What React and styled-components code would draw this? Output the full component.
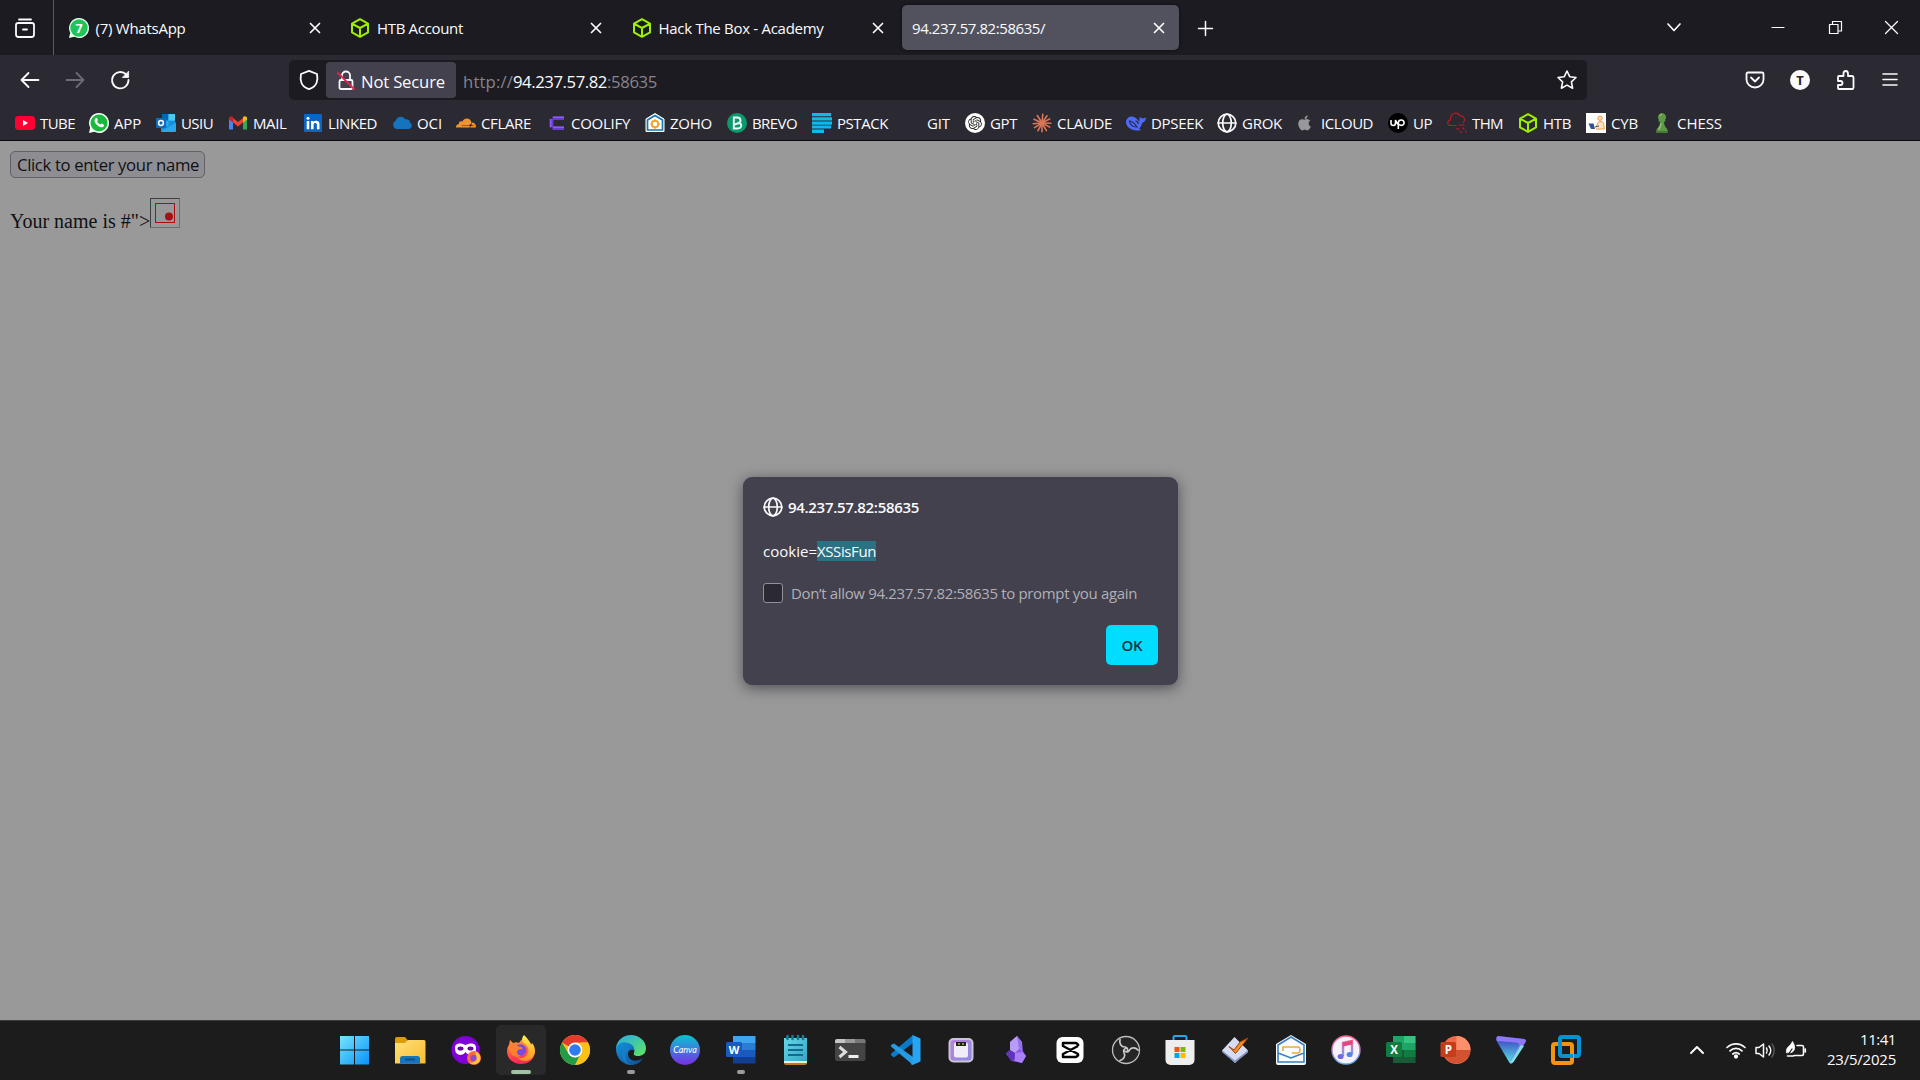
import React, { useLayoutEffect, useRef, useState } from "react";
import styled, { createGlobalStyle } from "styled-components";
import { FaApple, FaChessPawn } from "react-icons/fa";
import { SiOpenai, SiCloudflare } from "react-icons/si";

const ui = `"Segoe UI", "Open Sans", "Noto Sans", sans-serif`;

const Global = createGlobalStyle`
  * { box-sizing: border-box; }
  html, body { margin: 0; padding: 0; overflow: hidden; background: #1c1b22; }
  svg { display: block; flex: none; overflow: visible; }
`;

/* ---------- text ---------- */

const TextRun = styled.span`
  display: block;
  flex: none;
  white-space: pre;
  font-family: ${ui};
  font-size: ${(p) => p.$size || 15}px;
  font-weight: ${(p) => p.$weight || 400};
  font-stretch: 93%;
  line-height: 20px;
  color: ${(p) => p.$color || "#fbfbfe"};
  background: ${(p) => p.$bg || "transparent"};
`;

/* A label whose tracking is adjusted so that it fills the given width. */
function Text({ w, size, weight, color, bg, children }) {
  const ref = useRef(null);
  const [gap, setGap] = useState(0);
  useLayoutEffect(() => {
    const range = document.createRange();
    range.selectNodeContents(ref.current);
    const natural = range.getBoundingClientRect().width;
    setGap((w - natural) / children.length);
  }, [w, children]);
  return (
    <TextRun ref={ref} $size={size} $weight={weight} $color={color} $bg={bg} style={{ width: w, letterSpacing: gap }}>
      {children}
    </TextRun>
  );
}

/* ---------- layout ---------- */

const Screen = styled.div`
  width: 1920px;
  height: 1080px;
  display: flex;
  flex-direction: column;
  font-family: ${ui};
`;

const TabStrip = styled.header`
  height: 55px;
  flex: none;
  display: flex;
  background: #1c1b22;
`;

const ViewButton = styled.div`
  width: 54px;
  padding: 18px 0 0 15px;
  border-right: 1px solid #5c5b63;
`;

const Tabs = styled.nav`
  display: flex;
  gap: 4.5px;
  padding: 5px 0 5px 3.5px;
`;

const Tab = styled.div`
  width: 277px;
  height: 45px;
  display: flex;
  align-items: center;
  gap: 7px;
  padding: 0 15px 0 ${(p) => (p.$active ? 10 : 11)}px;
  border-radius: 5px;
  background: ${(p) => (p.$active ? "#52525e" : "transparent")};
  box-shadow: ${(p) => (p.$active ? "0 0 3px rgba(0,0,0,.6)" : "none")};
`;

const TabTitle = styled.div`
  flex: 1;
  padding-top: 1px;
`;

const NewTab = styled.div`
  padding: 21px 0 0 19px;
`;

const WindowControls = styled.div`
  margin-left: auto;
  display: flex;
  align-items: center;
  height: 55px;
  padding-right: 22px;
`;

const Control = styled.div`
  width: ${(p) => p.$w}px;
  display: flex;
  justify-content: flex-end;
`;

const Toolbar = styled.div`
  height: 51px;
  flex: none;
  display: flex;
  align-items: center;
  padding: 0 0 1px 20px;
  background: #2b2a33;
`;

const NavButtons = styled.div`
  width: 269px;
  display: flex;
  gap: 25px;
`;

const UrlBar = styled.div`
  width: 1298px;
  height: 40px;
  display: flex;
  align-items: center;
  padding: 0 10px;
  border-radius: 5px;
  background: #1c1b22;
`;

const Identity = styled.div`
  width: 130px;
  height: 36px;
  margin: 0 7px;
  display: flex;
  align-items: center;
  gap: 6px;
  padding-left: 11px;
  border-radius: 4px;
  background: #42414d;
`;

const UrlText = styled.div`
  display: flex;
  padding-top: 4px;
`;

const Push = styled.div`
  margin-left: auto;
`;

const ToolIcons = styled.div`
  margin-left: auto;
  display: flex;
  gap: 25px;
  padding-right: 20px;
`;

const BookmarkBar = styled.div`
  height: 35px;
  flex: none;
  display: flex;
  padding: 7px 0 0 15px;
  background: #2b2a33;
  border-bottom: 1px solid #08080a;
`;

const Bookmark = styled.div`
  width: ${(p) => p.$w}px;
  height: 20px;
  flex: none;
  display: flex;
  gap: 5px;
`;

const Page = styled.main`
  flex: 1;
  position: relative;
  background: #99999a;
`;

const Content = styled.section`
  padding: 10px;
`;

const NameButton = styled.div`
  width: 195px;
  height: 27px;
  display: flex;
  align-items: center;
  padding-left: 6px;
  border: 1px solid #626266;
  border-radius: 5px;
  background: #8e8e92;
`;

const NameLine = styled.p`
  margin: 20px 0 0;
  display: flex;
  align-items: flex-end;
  font: 20px/22px "Liberation Serif", serif;
  color: #101012;
`;

const NameText = styled.span`
  width: 140px;
  height: 18px;
  white-space: pre;
`;

const Broken = styled.span`
  width: 30px;
  height: 30px;
  padding: 4px;
  border: 1px solid;
  border-color: #3f3f42 #6f6f72 #6f6f72 #3f3f42;
`;

const Dialog = styled.section`
  position: absolute;
  left: 743px;
  top: 336px;
  width: 435px;
  height: 208px;
  display: flex;
  flex-direction: column;
  padding: 20px 20px 20px;
  border-radius: 9px;
  background: #42414d;
  box-shadow: 0 3px 14px rgba(20, 20, 26, 0.55);
`;

const DialogRow = styled.div`
  height: 20px;
  display: flex;
  align-items: center;
  gap: ${(p) => p.$gap || 0}px;
  margin-bottom: ${(p) => p.$mb || 0}px;
`;

const Checkbox = styled.span`
  width: 20px;
  height: 20px;
  border: 1px solid #8f8f9d;
  border-radius: 3px;
  background: #2b2a33;
`;

const OkButton = styled.div`
  align-self: flex-end;
  margin-top: auto;
  width: 52px;
  height: 40px;
  display: flex;
  align-items: center;
  justify-content: center;
  border-radius: 5px;
  background: #00ddff;
`;

const Taskbar = styled.footer`
  height: 60px;
  flex: none;
  display: flex;
  padding-left: 327px;
  background: #1c1c1c;
  border-top: 1px solid #3a3a3a;
`;

const Slot = styled.div`
  width: 55.07px;
  display: flex;
  justify-content: center;
  padding: 4px 0 0 ${(p) => p.$shift || 0}px;
`;

const Tile = styled.div`
  width: 50px;
  height: 50px;
  flex: none;
  display: flex;
  flex-direction: column;
  align-items: center;
  justify-content: space-between;
  padding: 10px 0 1px;
  border-radius: 5px;
  background: ${(p) => (p.$active ? "#292929" : "transparent")};
`;

const Mark = styled.i`
  width: ${(p) => p.$w}px;
  height: 4px;
  border-radius: 2px;
  background: ${(p) => (p.$active ? "#a3c2a5" : "#9b9b9b")};
`;

const Tray = styled.div`
  margin-left: auto;
  display: flex;
  padding-right: 24px;
`;

const TrayIcons = styled.div`
  display: flex;
  align-items: center;
  gap: 10px;
  height: 58px;
  margin-right: 21px;
`;

const Overflow = styled.div`
  margin-right: 12px;
`;

const Clock = styled.div`
  display: flex;
  flex-direction: column;
  align-items: flex-end;
  padding-top: 8px;
`;

/* ---------- icons ---------- */

const Line = ({ s = 20, h, c = "#fbfbfe", sw = 1.8, children }) => (
  <svg width={s} height={h || s} viewBox={`0 0 ${s} ${h || s}`} fill="none" stroke={c} strokeWidth={sw} strokeLinecap="round" strokeLinejoin="round">
    {children}
  </svg>
);
const Art = ({ s = 20, children }) => (
  <svg width={s} height={s} viewBox={`0 0 ${s} ${s}`}>{children}</svg>
);

const Cross = ({ s = 10, sw = 1.7 }) => <Line s={s} sw={sw}><path d={`M.5 .5 ${s - 0.5} ${s - 0.5}M${s - 0.5} .5 .5 ${s - 0.5}`} /></Line>;
const Globe = () => (
  <Line sw={1.7}><circle cx="10" cy="10" r="8.8" /><ellipse cx="10" cy="10" rx="4.3" ry="8.8" /><path d="M1.2 10h17.6" /></Line>
);
const HtbCube = () => (
  <Line c="#9fef00" sw={2}><path d="M10 1.2 18 5.6v8.8L10 18.8 2 14.4V5.6ZM2.4 5.8 10 10l7.6-4.2M10 10v8.5" /></Line>
);
const bubble = "M10 0a10 10 0 1 1-4.7 18.8L0 20l1.2-5.2A10 10 0 0 1 10 0Z";
const WhatsTab = () => (
  <Art><path d={bubble} fill="#e4ffec" /><circle cx="10" cy="10" r="8.700" fill="#1fc45a" /><text x="10" y="14.600" textAnchor="middle" fontFamily="Open Sans" fontWeight="700" fontSize="12.500" fill="#fff">7</text></Art>
);
const WhatsMark = () => (
  <Art><path d={bubble} fill="#f4fff6" /><circle cx="10" cy="10" r="8.500" fill="#19b93c" /><path d="M6.500 5.200c.8-.7 1.600-.4 1.900.6l.4 1c.2.8-.7 1.200-.7 1.600.6 1.400 1.800 2.500 3.300 3.100.5.100.9-1 1.500-.9l1.600.8c1 .5.4 2-.5 2.500-2 1.200-5.300-.5-7-2.800C5.400 9.200 5 6.600 6.500 5.200Z" fill="#fff" /></Art>
);

const B = {
  TUBE: <Art><rect y="3" width="20" height="14" rx="3.4" fill="#ff0033" /><path d="m8 7 5 3-5 3Z" fill="#fff" /></Art>,
  APP: <WhatsMark />,
  USIU: <Art><rect x="6" y="1" width="13" height="13" fill="#28a8ea" /><path d="M6 1h6.500v6.500H6z" fill="#0364b8" /><path d="M12.500 7.500H19V14h-6.500z" fill="#1490df" /><path d="M12.500 1H19v6.500h-6.500z" fill="#50c4f4" /><path d="M5 10l8 4 7-5v8.500a1.500 1.500 0 0 1-1.500 1.500H6.500A1.500 1.500 0 0 1 5 17.500Z" fill="#1a8fe0" /><path d="m5 18 15-8v8l-1 1H6Z" fill="#2ba6ea" /><rect y="5" width="10" height="10" rx="1" fill="#0f6cbd" /><circle cx="5" cy="10" r="2.400" fill="none" stroke="#fff" strokeWidth="1.500" /></Art>,
  MAIL: <Art><path d="M1 4.500v12h4V9Z" fill="#4285f4" /><path d="M15 9v7.500h4v-12Z" fill="#34a853" /><path d="M5 5v4.500l5 4 5-4V5l-5 4Z" fill="#ea4335" /><path d="M1 5.500C1 3 3.400 2.600 5 4v5.500L1 6.500Z" fill="#c5221f" /><path d="M19 5.500C19 3 16.600 2.600 15 4v5.500l4-3Z" fill="#fbbc04" /></Art>,
  LINKED: <Art><rect x="1" y="1" width="18" height="18" rx="1" fill="#0a66c2" /><path d="M3.700 8h2.600v8.300H3.700zM8 8h2.500v1.200c1.400-2.200 6-2 6 2v5.100h-2.600v-4.500c0-2.500-3.300-2.200-3.300 0v4.500H8z" fill="#fff" /><circle cx="5" cy="5.200" r="1.500" fill="#fff" /></Art>,
  OCI: <Art><path d="M4.500 16A4.300 4.300 0 0 1 3.500 8C5 3 11 2.500 13 6.200c3.500-.4 5 1 5 3.300 3 2 2 6.500-1.500 6.500Z" fill="#1673be" /></Art>,
  CFLARE: <SiCloudflare size={20} color="#f6922d" />,
  COOLIFY: <Art><path d="M6.500 3.500H18v3.500H7.500v6.500H18V17H6.500v-2.500H3.500V6h3Z" fill="#6a3bcf" /><path d="M7 3.500h11v1.500H7zM7 13.500h11V15H7zM4 6h1.500v8H4z" fill="#8b5cf6" /></Art>,
  ZOHO: <Art><path d="M10 .5 19 6v12.500H1V6Z" fill="#fff" stroke="#fff" strokeLinejoin="round" /><path d="M10 2.500 17.500 7v10H2.500V7Z" fill="none" stroke="#1677ae" strokeWidth="1.700" /><circle cx="10" cy="11" r="3.200" fill="none" stroke="#f0a226" strokeWidth="1.800" /><path d="M10 6v2M10 14v2M5.500 11h1.500M13 11h2M6.800 7.800l1.200 1.200M12 13l1.200 1.200M13.200 7.800 12 9M8 13l-1.200 1.200" stroke="#f0a226" strokeWidth="1.300" /></Art>,
  BREVO: <Art><circle cx="10" cy="10" r="10" fill="#0b996e" /><path d="M6.800 4.500v11h3.700c4.800 0 4.800-5.500 1.200-5.500 2.800-1 2.300-5.500-1.300-5.500ZM6.800 11.800 11.700 10" fill="none" stroke="#effff9" strokeWidth="1.900" /></Art>,
  PSTACK: <Art><path d="M0 0h19v3.300H0zM0 4.200h20v3.300H0zM0 8.400h20v3.300H0zM0 12.500h19v3H0zM0 16.500h12V20H0z" fill="#11b9ea" /></Art>,
  GIT: <Art />,
  GPT: <Art><circle cx="10" cy="10" r="10" fill="#fff" /><SiOpenai x="3" y="3" size={14} color="#222" /></Art>,
  CLAUDE: <Line c="#d97757" sw={1.600}>{[5, 35, 62, 92, 118, 150, 180, 208, 238, 265, 295, 328].map((a) => <path key={a} d="M10 10V1.200" transform={`rotate(${a} 10 10)`} />)}</Line>,
  DPSEEK: <Art><path d="M0 8C2 2.500 6 2.800 9 4.500c2 1 3 3 4.500 4.200V4l3 1.500c1.500-.1 2.500-.6 3.500-1-.3 3-1.700 5-4 5.500-.2 2.500-1.200 4-3 5.500l2 1.500c-4 1-6 .6-9-.5C2 15-.2 12 0 8Z" fill="#4d6bfe" /><path d="M3.500 8c3-.2 5.500 3 7.500 6-3.700.2-6.800-2-7.500-6ZM9.500 8c1.300-.1 2.500 1.300 3 3" fill="none" stroke="#2b2a33" strokeWidth="1.200" /></Art>,
  GROK: <Globe />,
  ICLOUD: <Art><FaApple x="0" y="1.500" size={17} color="#98979b" /></Art>,
  UP: <Art><circle cx="10" cy="10" r="10" fill="#000" /><path d="M3 7v3.300c0 3 4.500 3 4.500 0V7c1 2.500 1.500 4 3.200 4.800M10.300 16v-6c0-4 5.800-4 5.800-.3 0 3-3.300 3.400-5 1.500" fill="none" stroke="#fff" strokeWidth="1.600" /></Art>,
  THM: <Line c="#b51b28" sw={1.200}><path d="M9 12.500H4C-.5 12.500 0 7.500 3.500 7 3-1 11-1.500 13 3c4-.5 6 3.500 3.500 6.500M12 12h5M9.500 16h3M16 15l1 1M13 19h2M18.500 18l.8 1" /></Line>,
  HTB: <HtbCube />,
  CYB: <Art><rect width="20" height="20" fill="#fdfdfd" /><path d="M2.500 10.500h5L9 16H5z" fill="#2e5191" /><path d="M10.500 13 12 9.500c1-1.500 5-1.500 5.500.5l1 6H10" fill="#fbe0bd" stroke="#eba04b" /><circle cx="14" cy="5.200" r="2.200" fill="#fbd8ad" stroke="#eba04b" /><path d="m9 14 4-1" stroke="#2e5191" /></Art>,
  CHESS: <Art><path d="M10 0a4.200 4.200 0 0 1 3 7l1 1.500h-2c0 3 1 5.500 3.500 8V20h-11v-3.500C7 14 8 11.500 8 8.500H6L7 7a4.200 4.200 0 0 1 3-7Z" fill="#5d9948" /><path d="M8 3a2.500 2.500 0 0 1 2-1.600M9.200 10c-.2 2.500-1 4.500-2.500 6.500" stroke="#8fc46a" strokeWidth="1.300" fill="none" /><path d="M4.500 18h11v2h-11z" fill="#457a35" /></Art>,
};

const bookmarks = [
  ["TUBE", 74, 35], ["APP", 67, 27], ["USIU", 72, 32], ["MAIL", 75, 33.5], ["LINKED", 89, 49], ["OCI", 64, 25],
  ["CFLARE", 90, 50], ["COOLIFY", 99, 59], ["ZOHO", 82, 42], ["BREVO", 85, 45], ["PSTACK", 90, 51], ["GIT", 63, 23],
  ["GPT", 67, 27], ["CLAUDE", 94, 55], ["DPSEEK", 91, 52], ["GROK", 79, 40], ["ICLOUD", 92, 52], ["UP", 59, 19],
  ["THM", 71, 31], ["HTB", 68, 28], ["CYB", 66, 27], ["CHESS", 70, 45],
];

const G = ({ id, a, b, v }) => (
  <linearGradient id={id} x1="0" y1="0" x2={v ? 0 : 1} y2="1"><stop stopColor={a} /><stop offset="1" stopColor={b} /></linearGradient>
);
const Big = ({ children }) => <Art s={30}>{children}</Art>;

const apps = [
  { name: "start", icon: <Big><defs><linearGradient id="w1" gradientUnits="userSpaceOnUse" x1="0" y1="0" x2="30" y2="30"><stop stopColor="#79e7ff" /><stop offset="1" stopColor="#078ff7" /></linearGradient></defs><path d="M0 1h14v13.600H0zM15 1h14v13.600H15zM0 15.600h14V29.500H0zM15 15.600h14V29.500H15z" fill="url(#w1)" /></Big> },
  { name: "files", icon: <Big><defs><G id="f1" a="#ffe07c" b="#f8bd2f" /></defs><path d="M0 4a2 2 0 0 1 2-2h8l3 3.500v6H0Z" fill="#dc9b08" /><path d="M0 8h10l3-3h16a1.500 1.500 0 0 1 1.500 1.500v22H0Z" fill="url(#f1)" /><path d="M5 28.500v-5A2.500 2.500 0 0 1 7.500 21h15a2.500 2.500 0 0 1 2.500 2.500v5Z" fill="#1476bf" /><path d="M10 24.500h10" stroke="#0b4f86" strokeWidth="2" /></Big> },
  { name: "private", shift: 2, icon: <Big><circle cx="14.500" cy="15" r="14" fill="#8000d7" /><path d="M4 13c0-6 7-5 10.500-3C18 8 25 7 25 13c0 9-8 8-10.500 4C12 21 4 22 4 13Z" fill="#fff" /><ellipse cx="9.500" cy="13.500" rx="3" ry="2" fill="#6500ad" /><ellipse cx="19.500" cy="13.500" rx="3" ry="2" fill="#6500ad" /><circle cx="23" cy="23" r="7" fill="#ff6b32" /><path d="M24 16c5 2 7 7 4 11-3 3-8 3-10 0 6 3 9-4 6-11Z" fill="#ffc43d" /><circle cx="22.500" cy="23" r="3.200" fill="#914bd1" /></Big> },
  { name: "firefox", shift: 2, active: true, mark: 20, icon: <Big><defs><G id="ff" a="#ff9d2e" b="#ff2458" v /><G id="fy" a="#fff44f" b="#ff8d24" v /></defs><path d="M4 5c1 1 2 2 3 3 2-1 4-1 6 0 1-2 3-4 5-5 3 1 9 6 10.500 13 1 8-6 13-13.500 13S1 24 1 16.500C1 13 2 11 3 10Z" fill="url(#ff)" /><path d="M18 0c-3 3-2 7 1 9 4 3 5 8 1 12-3 3-7 2-9 1 7 8 17 3 18-5 .4-5-2-8-3-9l-1 2c-1-4-4-7-7-10Z" fill="url(#fy)" /><circle cx="14.500" cy="15" r="5.800" fill="#794be0" /><path d="M2 11c6-2 11 0 15 2-2 2-4 1-5 2-2 2-1 5 3 6-8 3-12-4-13-10Z" fill="#ff812e" /></Big> },
  { name: "chrome", shift: 1, icon: <Big><circle cx="15" cy="15" r="15" fill="#fbc116" /><path d="M15 15 2 7.500A15 15 0 0 1 28 7.500H15Z" fill="#e33b2e" /><path d="M15 30A15 15 0 0 1 2 7.500L8.500 18.800 15 22.500l4.500-1.500Z" fill="#239b48" /><path d="M28 7.500A15 15 0 0 1 15 30l6.500-11.200V7.500Z" fill="#fbc116" /><circle cx="15" cy="15" r="7.400" fill="#fff" /><circle cx="15" cy="15" r="5.800" fill="#2f7cf0" /></Big> },
  { name: "edge", shift: 2, mark: 8, icon: <Big><defs><G id="e1" a="#27a8eb" b="#62e75c" /><G id="e2" a="#1692dd" b="#0d4c93" /></defs><path d="M0 14C0 6 7 0 15 0s15 6 15 13c0 6-4 8-8 8-3 0-5-1-4-3 2-5-3-9-8-8-5 0-8 2-10 4Z" fill="url(#e1)" /><path d="M0 14c1-5 7-8 12-6 5 1 7 5 6 8-1-2-6-2-6 3 0 7 9 9 15 4-3 5-7 7-12 7C7 30 0 23 0 14Z" fill="url(#e2)" /><path d="M9 12c-6 7-3 16 6 18C8 28 7 17 13 14Z" fill="#1580c8" /></Big> },
  { name: "canva", icon: <Big><defs><G id="c1" a="#05c7cf" b="#7c2be8" v /></defs><circle cx="15" cy="15" r="15" fill="url(#c1)" /><text x="15" y="18" textAnchor="middle" fontFamily="Lato" fontStyle="italic" fontSize="9" fill="#fff">Canva</text></Big> },
  { name: "word", shift: 2, mark: 8, icon: <Big><path d="M7 1h22.500v7H7z" fill="#41a5ee" /><path d="M7 8h22.500v7H7z" fill="#2b7cd3" /><path d="M7 15h22.500v7H7z" fill="#185abd" /><path d="M7 22h22.500v6.500H7z" fill="#103f91" /><rect y="7" width="16" height="15" rx="1.500" fill="#185abd" /><text x="8" y="18.500" textAnchor="middle" fontFamily="Open Sans" fontWeight="700" fontSize="11" fill="#fff">W</text></Big> },
  { name: "notepad", icon: <Big><defs><G id="n1" a="#65d8e8" b="#32a5c3" /></defs><rect x="4" y="25" width="23" height="5" rx="2" fill="#c17622" /><path d="M4 3h23v24H4Z" fill="url(#n1)" /><path d="M4 26h23v2H4z" fill="#f5ead3" /><path d="M8 10h15M8 15h15M8 20h15" stroke="#126a8f" strokeWidth="1.800" /><path d="M7.500 1v3M12.500 1v3M18 1v3M23 1v3" stroke="#1a7893" strokeWidth="2.600" strokeLinecap="round" /></Big> },
  { name: "terminal", icon: <Big><rect y="4" width="30.500" height="22" rx="2" fill="#444" /><path d="M2 4h18v4H0V6a2 2 0 0 1 2-2Z" fill="#c5c5c5" /><path d="M10 4h10v4H10z" fill="#999" /><path d="M20 4h8.500a2 2 0 0 1 2 2v2H20z" fill="#777" /><path d="m4.500 12 6 5-6 5" fill="none" stroke="#ddd" strokeWidth="3" /><path d="M13.500 21.500h10" stroke="#eee" strokeWidth="3" /></Big> },
  { name: "code", shift: 2, icon: <Big><path d="M22 0v8L3 22.500l-3-2.200v-1.600Z" fill="#087ccb" /><path d="M22 30v-8L3 8.500 0 10v1.600Z" fill="#269be5" /><path d="m21.500 0 8 3.500v23l-8 3.500-2-1 2-2Z" fill="#27a4f2" /></Big> },
  { name: "scale", shift: 1, icon: <Big><defs><G id="s1" a="#be81dd" b="#8a8bdf" /></defs><rect x="3.500" y="4" width="23" height="22.500" rx="4" fill="url(#s1)" stroke="#cbc5d6" strokeWidth="2" /><rect x="8" y="7.500" width="14" height="15" rx="2" fill="#f1edf8" /><path d="M10 7h10v4H10z" fill="#242124" /><path d="M12 8h2v2h-2zM16 8h2v2h-2z" fill="#8a902f" /></Big> },
  { name: "obsidian", shift: 2, icon: <Big><path d="m16 1 5 6 1 9 3 5-4 7-10-2-6-7 4-4V7Z" fill="#8556db" /><path d="m16 1-7 6v8l5 3 5-5Z" fill="#b99cf8" /><path d="m16 1 5 6v10l-3-3Z" fill="#9372e6" /><path d="m5 18 4-3 5 3-1 7-3 1Z" fill="#6033b9" /><path d="m14 18 7-1 4 4-4 7-7-2Z" fill="#a980fa" /></Big> },
  { name: "capcut", icon: <Big><rect x="1.500" y="2" width="27" height="26" rx="6" fill="#fff" /><path d="M23 11V9.500L21 8H8v3l15 8v1.500L21 22H8v-3l15-8" fill="none" stroke="#050505" strokeWidth="2.500" strokeLinejoin="round" /></Big> },
  { name: "obs", shift: 1, icon: <Big><circle cx="15" cy="15" r="13.500" fill="#252525" stroke="#bdbdbd" strokeWidth="1.300" />{[0, 120, 240].map((r) => <g key={r} transform={`rotate(${r} 15 15)`}><path d="M9 4.500c-1 4 1 7.500 5 7.500 2 .3 3 1.500 2.500 4" fill="none" stroke="#c9c9c9" strokeWidth="1.700" strokeLinecap="round" /></g>)}</Big> },
  { name: "store", icon: <Big><path d="M8.500 6V2.500A1.500 1.500 0 0 1 10 1h10A1.500 1.500 0 0 1 21.500 2.500V6" fill="none" stroke="#24a9e8" strokeWidth="2" /><path d="M.5 5h29v20a5 5 0 0 1-5 5h-19a5 5 0 0 1-5-5Z" fill="#eee" /><path d="M9.500 12h5v5h-5z" fill="#f25022" /><path d="M15.500 12h5v5h-5z" fill="#7fba00" /><path d="M9.500 18h5v5h-5z" fill="#00a4ef" /><path d="M15.500 18h5v5h-5z" fill="#ffb900" /></Big> },
  { name: "tasks", icon: <Big><path d="M13.500 2 27 15.500 14 28 1 15.500Z" fill="#d6dcf4" /><path d="m1 15.500 13 10 13-10v2L14 28 1 17Z" fill="#8293bb" /><path d="M8 11.500 13 15l6-8 8-4-12.500 15.500Z" fill="#f4901d" stroke="#a33e0c" /></Big> },
  { name: "mail", icon: <Big><path d="M15 0 30 9v19a2 2 0 0 1-2 2H2a2 2 0 0 1-2-2V9Z" fill="#fbfcfd" /><path d="M15 2 28 10v17H2V10Zm13 8v8l-13 5L2 18v-8" fill="none" stroke="#397fbd" strokeWidth="1.600" /><path d="M7 16v-4h15q2 0 2 3t-2 3h-6" fill="none" stroke="#edac37" strokeWidth="1.600" /></Big> },
  { name: "music", icon: <Big><defs><G id="m1" a="#ff5b89" b="#5faeff" v /></defs><circle cx="15" cy="15" r="14" fill="#f6f1fb" stroke="url(#m1)" strokeWidth="1.400" /><path d="M12 21V8l9-2v13" fill="none" stroke="url(#m1)" strokeWidth="2.400" /><path d="M12 7.500 21 5.500v4l-9 2z" fill="#dc4a82" /><ellipse cx="9.600" cy="21.500" rx="3" ry="2.600" fill="#7368dc" /><ellipse cx="18.600" cy="19.500" rx="3" ry="2.600" fill="#5685e3" /></Big> },
  { name: "excel", icon: <Big><path d="M7 1h22.500v27H7z" fill="#185c37" /><path d="M7 1h11v14H7z" fill="#21a366" /><path d="M18 1h11.500v7H18z" fill="#33c481" /><path d="M18 8h11.500v7H18z" fill="#21a366" /><path d="M18 15h11.500v7H18z" fill="#107c41" /><rect y="7" width="16" height="15" rx="1.500" fill="#107c41" /><text x="8" y="18.500" textAnchor="middle" fontFamily="Open Sans" fontWeight="700" fontSize="11.500" fill="#fff">X</text></Big> },
  { name: "powerpoint", icon: <Big><circle cx="15.500" cy="15" r="14" fill="#ed6c47" /><path d="M15.500 1a14 14 0 0 1 14 14h-14Z" fill="#ff8f6b" /><path d="M15.500 15h14a14 14 0 0 1-25 8Z" fill="#d35230" /><rect x="-.5" y="7" width="15.500" height="15" rx="1.500" fill="#c43e1c" /><text x="7.300" y="18.500" textAnchor="middle" fontFamily="Open Sans" fontWeight="700" fontSize="11.500" fill="#fff">P</text></Big> },
  { name: "vpn", icon: <Big><defs><G id="v1" a="#3a35c4" b="#57e9e0" v /></defs><path d="M2 1 28 4q3 1 1.500 3L17 27q-2 3-4 0L0 5Q-.500 1.500 2 1Z" fill="url(#v1)" /><path d="M2 1 28 4q3 1 1.500 3L17 27q-2 3-4 0l1-1L23 11q1-3-3-3.500L1 6Q-.500 2 2 1Z" fill="#8f78f6" /><path d="m25 10 3 1-10.500 16q-2 2-4 0l2-2Z" fill="#79e2e1" /></Big> },
  { name: "vmware", icon: <Big><rect x="9" y="2" width="19" height="19" rx="2" fill="none" stroke="#0893cf" strokeWidth="4" /><rect x="2" y="9" width="19" height="19" rx="2" fill="none" stroke="#f39410" strokeWidth="4" /><path d="M9 12V7M12 21h10" fill="none" stroke="#0893cf" strokeWidth="4" /></Big> },
];

export default function App() {
  return (
    <Screen>
      <Global />
      <TabStrip>
        <ViewButton>
          <Line><path d="M4 1.500h12M3.200 5h13.600Q19 5 19 7v9.500q0 2.500-2.500 2.500h-13Q1 19 1 16.500V7Q1 5 3.200 5ZM8 11.500h4" /></Line>
        </ViewButton>
        <Tabs>
          <Tab><WhatsTab /><TabTitle><Text w={90}>(7) WhatsApp</Text></TabTitle><Cross /></Tab>
          <Tab><HtbCube /><TabTitle><Text w={86}>HTB Account</Text></TabTitle><Cross /></Tab>
          <Tab><HtbCube /><TabTitle><Text w={165}>Hack The Box - Academy</Text></TabTitle><Cross /></Tab>
          <Tab $active><TabTitle><Text w={133}>94.237.57.82:58635/</Text></TabTitle><Cross /></Tab>
        </Tabs>
        <NewTab><Line s={15} sw={1.5}><path d="M7.500 .5v14M.5 7.500h14" /></Line></NewTab>
        <WindowControls>
          <Control $w={16}><Line s={15} h={9} sw={1.700}><path d="m1 1 6 6.500 6-6.500" /></Line></Control>
          <Control $w={102}><Line s={12} h={2} sw={1.200}><path d="M0 .5h12" /></Line></Control>
          <Control $w={58}><Line s={13} h={13} sw={1.200}><path d="M.5 3.500h8.500v9H.500zM3.500 3V.500h9V10H9.500" /></Line></Control>
          <Control $w={56}><Cross s={13} sw={1.300} /></Control>
        </WindowControls>
      </TabStrip>

      <Toolbar>
        <NavButtons>
          <Line><path d="M18.500 10H1.500m7-7-7 7 7 7" /></Line>
          <Line c="#6d6c74"><path d="M1.500 10h17m-7-7 7 7-7 7" /></Line>
          <Line><path d="M16.200 4.500A8.200 8.200 0 1 0 18.500 10" /><path d="M18.600 1.500v6h-6Z" fill="#fbfbfe" strokeWidth=".8" /></Line>
        </NavButtons>
        <UrlBar>
          <Line><path d="M10 .8 18 4q1 5-.5 9T10 19.200Q4 17 2.500 13T2 4Z" /></Line>
          <Identity>
            <Line s={18} h={20}><path d="M4 10h10q1.500 0 1.500 1.500v6Q15.500 19 14 19H4q-1.500 0-1.500-1.500v-6Q2.500 10 4 10Zm1-1V5.500a4 4 0 0 1 8 0V9" /><path d="m1 3 16 16" stroke="#e22850" /></Line>
            <UrlText><Text w={84} size={16.7}>Not Secure</Text></UrlText>
          </Identity>
          <UrlText>
            <Text w={50} size={16.7} color="#85848b">http://</Text>
            <Text w={94} size={16.7}>94.237.57.82</Text>
            <Text w={50} size={16.7} color="#85848b">:58635</Text>
          </UrlText>
          <Push><Line sw={1.600}><path d="m10 1 2.700 5.700 6.300.8-4.600 4.300 1.200 6.400L10 15.100l-5.600 3.100 1.200-6.400L1 7.500l6.300-.8Z" /></Line></Push>
        </UrlBar>
        <ToolIcons>
          <Line><path d="M3 2.500h14q1.500 0 1.500 1.500v5.500a8.500 8 0 0 1-17 0V4Q1.500 2.500 3 2.500ZM6 7.500l4 4 4-4" /></Line>
          <Art><circle cx="10" cy="10" r="10" fill="#fbfbfe" /><text x="10" y="14.700" textAnchor="middle" fontFamily="Open Sans" fontWeight="700" fontSize="13" fill="#25242b">T</text></Art>
          <Line><path d="M4 19q-1 0-1-1v-3h2.500q2 0 2-2t-2-2H3V7q0-1 1-1h4.500V3.500q0-2.500 2.200-2.500t2.300 2.500V6H17q1.500 0 1.500 2v9.500q0 1.500-1 1.500Z" /></Line>
          <Line sw={1.600}><path d="M3 4h14M3 9.500h14M3 15h14" /></Line>
        </ToolIcons>
      </Toolbar>

      <BookmarkBar>
        {bookmarks.map(([name, pitch, w]) => (
          <Bookmark key={name} $w={pitch}>{B[name]}<Text w={w}>{name}</Text></Bookmark>
        ))}
      </BookmarkBar>

      <Page>
        <Content>
          <NameButton><Text w={182} size={16.7} color="#101014">Click to enter your name</Text></NameButton>
          <NameLine>
            <NameText>{'Your name is #">'}</NameText>
            <Broken><Art><rect x=".5" y=".5" width="19" height="19" fill="none" stroke="#a90f12" /><circle cx="14" cy="13.500" r="4" fill="#a90f12" /></Art></Broken>
          </NameLine>
        </Content>
        <Dialog>
          <DialogRow $gap={5} $mb={24}><Globe /><Text w={131} weight={600}>94.237.57.82:58635</Text></DialogRow>
          <DialogRow $mb={22}><Text w={54}>cookie=</Text><Text w={59} bg="#2b7183">XSSisFun</Text></DialogRow>
          <DialogRow $gap={8}><Checkbox /><Text w={346} color="#b1b0b7">Don’t allow 94.237.57.82:58635 to prompt you again</Text></DialogRow>
          <OkButton><Text w={21} weight={600} color="#12323e">OK</Text></OkButton>
        </Dialog>
      </Page>

      <Taskbar>
        {apps.map((a) => (
          <Slot key={a.name} $shift={a.shift}><Tile $active={a.active}>{a.icon}{a.mark && <Mark $w={a.mark} $active={a.active} />}</Tile></Slot>
        ))}
        <Tray>
          <TrayIcons>
            <Overflow><Line s={14} h={8} sw={2}><path d="m1 7 6-6 6 6" /></Line></Overflow>
            <Line sw={1.700}><path d="M1 7.500a13 13 0 0 1 18 0M4 10.800a8.600 8.600 0 0 1 12 0M6.800 14a4.800 4.800 0 0 1 6.400 0" /><circle cx="10" cy="16.500" r="1.300" fill="#fff" /></Line>
            <Line sw={1.500}><path d="M0 7.500h3L7.500 4v13L3 13.500H0ZM10.500 8q1.500 2.500 0 5M13 6q3.500 4.500 0 9" /><path d="M16 4q4.500 6 0 13" stroke="#555" /></Line>
            <Line sw={1.600}><path d="M11 5.500h5q1.500 0 1.500 1.500v7q0 1.500-1.500 1.500H8M19.300 9v3" /><path d="M.5 12.500C-.5 7 4 7 6.500 1.500 9.500 6 9.500 11 5.500 12.500Z" fill="#fff" strokeWidth=".8" /><path d="M1 16.500 6 9" stroke="#1c1c1c" strokeWidth="1.200" /><path d="M1.500 16h6" /></Line>
          </TrayIcons>
          <Clock><Text w={36}>11:41</Text><Text w={69}>23/5/2025</Text></Clock>
        </Tray>
      </Taskbar>
    </Screen>
  );
}
